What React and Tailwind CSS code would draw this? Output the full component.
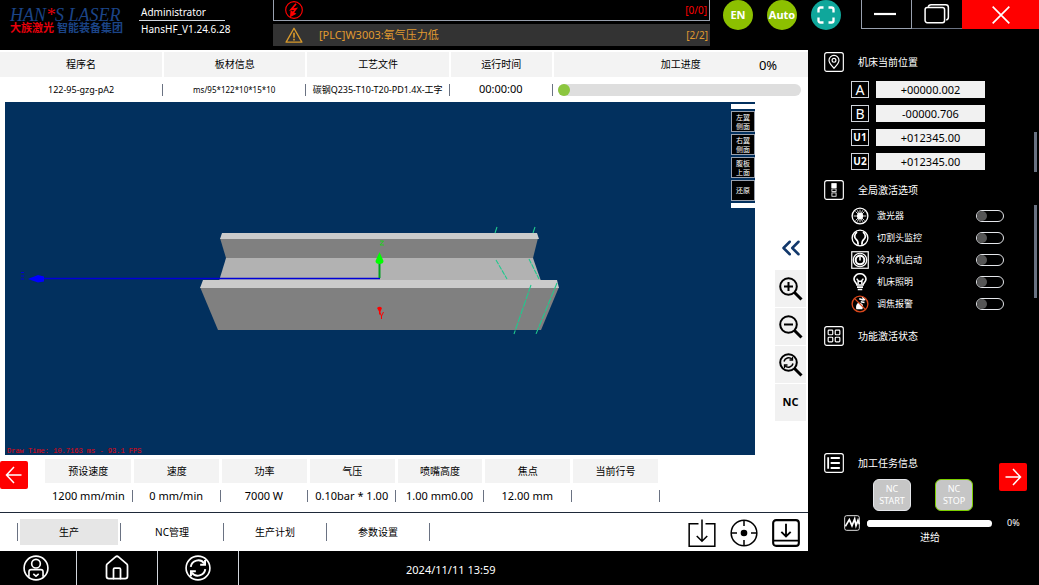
// App.jsx
import React from 'react';
import { Home, ChevronsLeft } from 'lucide-react';

// =================================================================
// 数据
// =================================================================

const params = [
  { name: '预设速度', value: '1200 mm/min' },
  { name: '速度', value: '0 mm/min' },
  { name: '功率', value: '7000 W' },
  { name: '气压', value: '0.10bar * 1.00' },
  { name: '喷嘴高度', value: '1.00 mm0.00' },
  { name: '焦点', value: '12.00 mm' },
  { name: '当前行号', value: '' },
];

const axes = [
  { name: 'A', value: '+00000.002' },
  { name: 'B', value: '-00000.706' },
  { name: 'U1', value: '+012345.00' },
  { name: 'U2', value: '+012345.00' },
];

const views = [['左翼', '侧面'], ['右翼', '侧面'], ['腹板', '上面'], ['还原']];

const tabs = ['生产', 'NC管理', '生产计划', '参数设置'];

// =================================================================
// 图标
// =================================================================

const Svg = ({ size = 24, stroke = 1.5, className = '', children }) => (
  <svg
    width={size}
    height={size}
    viewBox="0 0 24 24"
    fill="none"
    stroke="currentColor"
    strokeWidth={stroke}
    className={`shrink-0 ${className}`}
    aria-hidden="true"
  >
    {children}
  </svg>
);

const AlarmIcon = () => (
  <Svg size={20} stroke={1.4} className="text-[#ff0000]">
    <circle cx="12" cy="12" r="10" />
    <path d="M14.500 4.500L8.500 11.500l6-1-4 5" strokeWidth="2" />
    <path d="M8 19.500l.5-6 5 3z" fill="currentColor" />
  </Svg>
);

const WarnIcon = () => (
  <Svg size={18} stroke={1.8} className="text-[#d99a2b]">
    <path d="M12 3L22.5 21.5H1.5z" strokeLinejoin="round" />
    <path d="M12 9v6.5M12 17v2.2" strokeWidth="2.2" />
  </Svg>
);

const FullscreenIcon = () => (
  <Svg size={20} stroke={2.8}>
    <path d="M3 9V5.5Q3 3 5.500 3H9M15 3h3.500Q21 3 21 5.500V9M21 15v3.500Q21 21 18.500 21H15M9 21H5.500Q3 21 3 18.500V15" />
  </Svg>
);

const RestoreIcon = () => (
  <Svg size={26} stroke={1.4}>
    <rect x="1" y="6" width="18" height="14" rx="2" />
    <path d="M4 5.500Q4.300 3.500 6.500 3.500H20Q22.500 3.500 22.500 6V15Q22.500 17 20.500 17.500" />
  </Svg>
);

const Lens = ({ children }) => (
  <Svg size={24} stroke={2}>
    <circle cx="9.500" cy="9.500" r="8.300" />
    <path d="M15.500 15.500l7 7" strokeWidth="3" />
    {children}
  </Svg>
);

const ZoomInIcon = () => <Lens><path d="M9.500 5v9M5 9.500h9" /></Lens>;
const ZoomOutIcon = () => <Lens><path d="M5 9.500h9" /></Lens>;
const ZoomResetIcon = () => (
  <Lens>
    <path d="M5 8.500a4.700 4.700 0 0 1 8-2.300M14 10.500a4.700 4.700 0 0 1-8 2.300" strokeWidth="1.500" />
    <path d="M13.500 4v3h-3M5.500 15v-3h3" strokeWidth="1.300" />
  </Lens>
);

// 右侧分组标题用的方框图标
const Boxed = ({ children }) => (
  <Svg size={20} stroke={1.4}>
    <rect x="0.8" y="0.8" width="22.4" height="22.4" rx="2.5" />
    {children}
  </Svg>
);

const PinIcon = () => (
  <Boxed>
    <path d="M12 19.500C8 15.500 6 13 6 10a6 6 0 0 1 12 0c0 3-2 5.500-6 9.500z" />
    <circle cx="12" cy="10" r="2.300" />
  </Boxed>
);

const OptionIcon = () => (
  <Boxed>
    <rect x="9.500" y="4.500" width="5" height="4.500" fill="currentColor" />
    <rect x="9.500" y="10.700" width="5" height="3" strokeWidth="1" />
    <rect x="9.500" y="15.500" width="5" height="4" strokeWidth="1" />
  </Boxed>
);

const GridIcon = () => (
  <Boxed>
    <rect x="5" y="5" width="5.500" height="5.500" rx="1" />
    <rect x="13.500" y="5" width="5.500" height="5.500" rx="1" />
    <rect x="5" y="13.500" width="5.500" height="5.500" rx="1" />
    <rect x="13.500" y="13.500" width="5.500" height="5.500" rx="1" />
  </Boxed>
);

const ListIcon = () => (
  <Boxed>
    <path d="M5 5v14M8 6h11M8 12h11M8 18h11" strokeWidth="2.200" />
  </Boxed>
);

const LaserIcon = () => (
  <Svg size={18} stroke={1.8}>
    <circle cx="12" cy="12" r="10.500" />
    <circle cx="12" cy="12" r="3.300" fill="currentColor" />
    <path d="M12 3.500v17M3.500 12h17M6 6l12 12M18 6L6 18M8.500 4.500l7 15M15.500 4.500l-7 15" strokeWidth="1.100" />
  </Svg>
);

const HeadIcon = () => (
  <Svg size={18} stroke={1.8}>
    <circle cx="12" cy="12" r="10.500" />
    <path d="M8 4c-4 3-4 8-1 10q2.500 1.500 2.500 7M16 4c4 3 4 8 1 10q-2.500 1.500-2.500 7" strokeWidth="2.300" />
  </Svg>
);

const ChillerIcon = () => (
  <Svg size={18} stroke={1.6}>
    <rect x="1" y="1" width="22" height="22" />
    <circle cx="12" cy="12" r="9" />
    <circle cx="12" cy="12" r="5.800" strokeWidth="2.800" />
    <path d="M12 7.500v5" strokeWidth="2" />
  </Svg>
);

const LampIcon = () => (
  <Svg size={18} stroke={2.200}>
    <path d="M8 16c0-2.500-4-4-4-8a8 7 0 0 1 16 0c0 4-4 5.500-4 8z" />
    <path d="M9.500 15V10L7.500 7.500M14.500 15V10l2-2.500M9.500 11h5" strokeWidth="2" />
    <path d="M8 18.800h8M9 22h6" />
  </Svg>
);

const FocusAlarmIcon = () => (
  <Svg size={18} stroke={1.8}>
    <path d="M7 19c-1-5 1-9 5-8.500s5 4 3 8.500z" fill="currentColor" stroke="none" />
    <path d="M11 5l6 2M13 9l5 1M15 3l4 4" strokeWidth="2" />
    <circle cx="12" cy="12" r="10.500" stroke="#d9481c" />
    <path d="M4.500 4.500l15 15" stroke="#d9481c" />
  </Svg>
);

const WaveIcon = () => (
  <Svg size={16} stroke={1.3}>
    <rect x="1" y="1" width="22" height="22" rx="3" />
    <path d="M2 17L8 7l4 9 4-10 2 10 3-8 2 6" strokeWidth="2.600" />
  </Svg>
);

const ImportIcon = () => (
  <Svg size={28} stroke={1.3}>
    <path d="M9 4H1v19.300h22V4h-8" />
    <path d="M12 .5V19M7.500 14.500L12 19l4.500-4.500" />
  </Svg>
);

const AimIcon = () => (
  <Svg size={28} stroke={1.3}>
    <circle cx="12" cy="12" r="11" />
    <circle cx="12" cy="12" r="2.200" fill="currentColor" />
    <path d="M12 1v5M12 18v5M1 12h5M18 12h5" />
  </Svg>
);

const SaveIcon = () => (
  <Svg size={28} stroke={1.8}>
    <rect x="1" y="1" width="22" height="22" rx="2.500" />
    <path d="M1 18.500h22M12 4v11M8 11l4 4 4-4" strokeWidth="1.600" />
  </Svg>
);

const UserIcon = () => (
  <Svg size={26} stroke={1.5}>
    <circle cx="12" cy="12" r="11" />
    <circle cx="12" cy="8" r="4" />
    <path d="M5.500 20v-4.500q0-2 2-2h9q2 0 2 2V20" />
    <path d="M9.500 17.500l2.500 2 2.500-2" />
  </Svg>
);

const RefreshIcon = () => (
  <Svg size={26} stroke={1.500}>
    <circle cx="12" cy="12" r="11" />
    <path d="M5.300 11a7 7 0 0 1 12.500-3.300M18.700 13a7 7 0 0 1-12.500 3.300" strokeWidth="1.800" />
    <path d="M18.500 4.500V9H14M5.500 19.500V15H10" strokeWidth="1.800" />
  </Svg>
);

const ArrowIcon = ({ flip }) => (
  <Svg size={20} stroke={1.8} className={flip ? 'rotate-180' : ''}>
    <path d="M3 12h18M12 2.500L21 12l-9 9.500" />
  </Svg>
);

const switches = [
  { name: '激光器', icon: <LaserIcon /> },
  { name: '切割头监控', icon: <HeadIcon /> },
  { name: '冷水机启动', icon: <ChillerIcon /> },
  { name: '机床照明', icon: <LampIcon /> },
  { name: '调焦报警', icon: <FocusAlarmIcon /> },
];

// =================================================================
// 公共组件
// =================================================================

const Round = ({ color, label, children }) => (
  <button
    aria-label={label}
    className={`flex size-[30px] items-center justify-center rounded-full text-[11px] font-bold text-white ${color}`}
  >
    {children}
  </button>
);

const SectionTitle = ({ icon, children }) => (
  <h2 className="flex h-5 items-center gap-3.5 text-[10px]">
    {icon}
    {children}
  </h2>
);

const Divider = ({ tall }) => <span className={`w-px shrink-0 bg-gray-500 ${tall ? 'h-[18px]' : 'h-3'}`} />;

// 顶部程序信息表的数值单元格
const InfoCell = ({ size, children }) => (
  <td className="p-0">
    <div className="flex h-[25px] items-center">
      <span className={`grow whitespace-nowrap text-center ${size}`}>{children}</span>
      <Divider />
    </div>
  </td>
);

// =================================================================
// 页面区域
// =================================================================

function Header() {
  return (
    <header className="flex h-[50px] shrink-0 items-start">
      <div className="w-[139px] shrink-0 pl-2.5 pt-2">
        <div className="font-['Liberation_Serif',serif] text-lg leading-[14px] whitespace-nowrap text-[#1b4487] italic">
          HAN<span className="text-red-600">*</span>S LASER
        </div>
        <div className="flex justify-between pr-4 text-[11px] leading-3 font-bold whitespace-nowrap">
          <span className="text-red-600">大族激光</span>
          <span className="text-[#1b4487]">智能装备集团</span>
        </div>
      </div>
      <div className="w-[86px] shrink-0 pt-1 text-[10px] leading-4">
        <div className="border-b border-gray-300 px-0.5">Administrator</div>
        <div className="px-0.5">HansHF_V1.24.6.28</div>
      </div>
      <div className="ml-12 flex min-w-0 grow flex-col gap-[3px] text-[11px]">
        <div className="flex h-[21px] items-center border border-t-0 border-gray-400 pr-0.5 pl-[10px] text-[#ff0000]">
          <AlarmIcon />
          <span className="ml-auto text-[10px]">[0/0]</span>
        </div>
        <div className="flex h-[22px] items-center bg-[#333333] pr-0.5 pl-3 text-[#e09a30]">
          <WarnIcon />
          <span className="ml-4">[PLC]W3003:氧气压力低</span>
          <span className="ml-auto text-[10px]">[2/2]</span>
        </div>
      </div>
      <div className="flex shrink-0 gap-3.5 px-[13px]">
        <Round color="bg-[#8cc000]">EN</Round>
        <Round color="bg-[#8cc000]">Auto</Round>
        <Round color="bg-[#0fa79b]" label="全屏"><FullscreenIcon /></Round>
      </div>
      <div className="ml-[7px] flex h-[29px] shrink-0">
        <button aria-label="最小化" className="flex w-[51px] items-center justify-center border border-t-0 border-gray-400 pr-1">
          <Svg size={22} stroke={2.400}><path d="M0 12h24" /></Svg>
        </button>
        <button aria-label="还原窗口" className="flex w-[50px] items-center justify-center border-b border-gray-500">
          <RestoreIcon />
        </button>
        <button aria-label="关闭" className="flex w-[77px] items-center justify-center bg-[#ff0000]">
          <Svg size={20} stroke={2}><path d="M2 2l20 20M22 2L2 22" /></Svg>
        </button>
      </div>
    </header>
  );
}

function ProgramInfo() {
  return (
    <table className="w-full table-fixed border-collapse">
      <colgroup>
        <col className="w-[20.2%]" />
        <col className="w-[17.7%]" />
        <col className="w-[17.8%]" />
        <col className="w-[12.7%]" />
        <col />
      </colgroup>
      <thead>
        <tr className="h-[25px] bg-[#f3f3f3] text-[10px]">
          {['程序名', '板材信息', '工艺文件', '运行时间'].map((t) => (
            <th key={t} className="border-r-2 border-white p-0 font-normal">{t}</th>
          ))}
          <th className="p-0 font-normal">
            <div className="flex items-center pl-20">
              <span className="grow text-center">加工进度</span>
              <span className="w-20 text-center text-[13px] leading-5">0%</span>
            </div>
          </th>
        </tr>
      </thead>
      <tbody>
        <tr>
          <InfoCell size="text-[9px]">122-95-gzg-pA2</InfoCell>
          <InfoCell size="text-[8px]">ms/95*122*10*15*10</InfoCell>
          <InfoCell size="text-[9px]">碳钢Q235-T10-T20-PD1.4X-工字</InfoCell>
          <InfoCell size="text-[11px]">00:00:00</InfoCell>
          <td className="p-0 pr-[7px] pl-[5px]">
            <div role="progressbar" aria-label="加工进度" aria-valuenow="0" className="h-3 rounded-full bg-[#dedede]">
              <div className="size-3 rounded-full bg-[#8cc63f]" />
            </div>
          </td>
        </tr>
      </tbody>
    </table>
  );
}

// 三维视图：工字钢模型和坐标轴
function Viewport() {
  return (
    <div className="relative ml-[5px] min-w-0 grow bg-[#02305e]">
      <svg className="absolute inset-0 size-full" viewBox="5 102 750 353" aria-hidden="true">
        <polygon points="226,258 533,258 541,281 219,281" fill="#b2b2b2" />
        <polygon points="220,238 538,238 533,258 226,258" fill="#808080" />
        <polygon points="222,233 537,233 539,239 220,239" fill="#cbcbcb" />
        <polygon points="200,287 559,287 541,330 218,330" fill="#808080" />
        <polygon points="203,280 557,280 559,288 200,288" fill="#cbcbcb" />
        <path d="M30 278.500H380" stroke="#0000d8" strokeWidth="1.300" />
        <path d="M28 279l10-4 6 1.500v5l-6 1z" fill="#0000ff" />
        <path d="M21 272.500h3M21 276h3M21 279h3" stroke="#0000d8" />
        <path d="M379.500 278V262" stroke="#00a020" strokeWidth="2" />
        <path d="M379.500 252l4 9q0 3-4 3t-4-3z" fill="#00ff00" />
        <path d="M380 241h3.500l-3.500 4h4" stroke="#20d020" fill="none" />
        <path d="M377 308q2.500-2.500 5 0l-1.500 3.500v3h-1.500v-3z" fill="#ff0000" />
        <path d="M380 313l1.500 3 2-4M381.500 316v3" stroke="#ff0000" fill="none" />
        <g stroke="#20c98e" strokeWidth="1.100" fill="none">
          <path d="M497 227l-2 6M535 227l-2 6" />
          <path d="M496 260l11 19M529 259l10 20" strokeDasharray="5 1" />
          <path d="M531 285L514 334M557 283L536 334" strokeDasharray="7 1" />
        </g>
      </svg>
      <p className="absolute bottom-0 left-0.5 font-['Liberation_Mono',monospace] text-[7px] leading-2 text-red-600">
        Draw Time: 10.7163 ms - 93.1 FPS
      </p>
      <div className="absolute top-0.5 right-0 flex w-6 flex-col items-stretch gap-0.5">
        <div className="h-[5px] bg-white" />
        {views.map((lines) => (
          <button key={lines.join('')} className="flex h-[21px] flex-col items-center justify-center border border-gray-400 bg-black text-[7px] leading-[9px] text-white">
            {lines.map((l) => <span key={l}>{l}</span>)}
          </button>
        ))}
        <div className="h-[5px] bg-white" />
      </div>
    </div>
  );
}

function ViewTools() {
  const tool = 'flex h-[37px] w-[31px] items-center justify-center bg-[#f1f1f1]';
  return (
    <div className="flex w-[53px] shrink-0 flex-col items-end pt-[131px] pr-0.5">
      <button aria-label="展开" className="mb-[7px] flex w-[31px] justify-center text-[#12386b]">
        <ChevronsLeft size={30} strokeWidth={2} />
      </button>
      <div className="flex flex-col gap-px">
        <button aria-label="放大" className={tool}><ZoomInIcon /></button>
        <button aria-label="缩小" className={tool}><ZoomOutIcon /></button>
        <button aria-label="复位" className={tool}><ZoomResetIcon /></button>
        <button className={`${tool} text-[11px] font-bold`}>NC</button>
      </div>
    </div>
  );
}

function ParamBar() {
  return (
    <div className="flex h-[58px] shrink-0 items-start border-b border-gray-800 pt-1">
      <div className="w-[45px] shrink-0 pt-0.5">
        <button aria-label="上一页" className="flex size-7 items-center justify-center rounded-xs bg-[#ff0000] text-white">
          <ArrowIcon flip />
        </button>
      </div>
      <div className="min-w-0 grow">
        <table className="w-full table-fixed border-collapse">
          <thead>
            <tr className="h-6">
              {params.map((p) => (
                <th key={p.name} className="border-r-3 border-white bg-[#f3f3f3] p-0 text-[10px] font-normal">{p.name}</th>
              ))}
            </tr>
          </thead>
          <tbody>
            <tr>
              {params.map((p) => (
                <td key={p.name} className="p-0">
                  <div className="flex h-[26px] items-center">
                    <span className="grow text-center text-[11px] whitespace-nowrap">{p.value}</span>
                    <Divider />
                  </div>
                </td>
              ))}
            </tr>
          </tbody>
        </table>
      </div>
      <div className="w-[147px] shrink-0" />
    </div>
  );
}

function TabBar() {
  return (
    <nav className="flex h-[38px] shrink-0 items-center pr-2 pl-[17px]">
      <Divider tall />
      {tabs.map((t, i) => (
        <React.Fragment key={t}>
          <button className={`mx-0.5 h-[26px] w-[98px] text-[10px] ${i === 0 ? 'bg-[#e6e6e6]' : ''}`}>{t}</button>
          <Divider tall />
        </React.Fragment>
      ))}
      <div className="ml-auto flex gap-3.5 pt-0.5">
        <button aria-label="导入"><ImportIcon /></button>
        <button aria-label="定位"><AimIcon /></button>
        <button aria-label="保存"><SaveIcon /></button>
      </div>
    </nav>
  );
}

function Footer() {
  const item = 'flex w-[81px] items-center justify-center border-r border-gray-300';
  return (
    <footer className="flex h-[34px] shrink-0 bg-black text-white">
      <button aria-label="用户" className="flex w-[77px] items-center justify-center border-r border-gray-300 pr-1"><UserIcon /></button>
      <button aria-label="主页" className={item}><Home size={28} strokeWidth={1.5} /></button>
      <button aria-label="刷新" className={item}><RefreshIcon /></button>
      <time className="ml-[167px] self-center pt-1 text-[11px]">2024/11/11 13:59</time>
    </footer>
  );
}

function SidePanel() {
  return (
    <aside className="flex w-[231px] shrink-0 flex-col pl-4">
      <section className="flex h-[129px] pt-0.5 pr-0.5">
        <div className="grow">
          <SectionTitle icon={<PinIcon />}>机床当前位置</SectionTitle>
          <div className="mt-[9px] flex flex-col gap-[7px] pl-[27px]">
            {axes.map((a) => (
              <label key={a.name} className="flex items-center gap-[7px]">
                <span className={`flex h-[17px] w-[18px] items-center justify-center border border-gray-300 ${a.name.length > 1 ? 'text-[10px] font-bold' : 'text-sm'}`}>
                  {a.name}
                </span>
                <input readOnly value={a.value} className="h-[17px] w-[109px] bg-[#f1f1f1] text-center text-[11px] text-black" />
              </label>
            ))}
          </div>
        </div>
        <div className="mt-20 h-10 w-[3px] bg-gray-500" />
      </section>

      <section className="flex h-[147px] pt-px pr-0.5">
        <div className="grow">
          <SectionTitle icon={<OptionIcon />}>全局激活选项</SectionTitle>
          <div className="mt-[5px] flex flex-col pl-[27px]">
            {switches.map((s) => (
              <label key={s.name} className="flex h-[22px] items-center pr-[30px] text-[9px]">
                {s.icon}
                <span className="ml-2">{s.name}</span>
                <input
                  type="checkbox"
                  role="switch"
                  className="ml-auto flex h-3 w-7 appearance-none items-center rounded-full border border-gray-200 before:size-2.5 before:rounded-full before:bg-[#555555] checked:justify-end"
                />
              </label>
            ))}
          </div>
        </div>
        <div className="mt-[25px] h-[93px] w-[3px] bg-gray-500" />
      </section>

      <section className="h-[126px]">
        <SectionTitle icon={<GridIcon />}>功能激活状态</SectionTitle>
      </section>

      <section className="pt-px">
        <div className="flex items-start justify-between pr-3">
          <SectionTitle icon={<ListIcon />}>加工任务信息</SectionTitle>
          <button aria-label="下一页" className="mt-2.5 flex size-7 items-center justify-center rounded-xs bg-[#ff0000]">
            <ArrowIcon />
          </button>
        </div>
        <div className="-mt-3 flex gap-6 pl-[49px] text-[9px] leading-3">
          <button className="h-8 w-[38px] rounded-md border border-gray-200 bg-[#c6c6c6]">NC<br />START</button>
          <button className="h-8 w-[38px] rounded-md border border-lime-500 bg-[#c6c6c6]">NC<br />STOP</button>
        </div>
        <label className="mt-1 flex items-center gap-[7px] pl-5 text-[9px]">
          <WaveIcon />
          <input
            type="range"
            defaultValue="0"
            aria-label="进给"
            className="h-[7px] w-[125px] appearance-none rounded-full bg-white [&::-webkit-slider-thumb]:size-[7px] [&::-webkit-slider-thumb]:appearance-none [&::-webkit-slider-thumb]:rounded-full [&::-webkit-slider-thumb]:bg-white"
          />
          <span className="ml-2">0%</span>
        </label>
        <p className="pl-24 text-[10px] leading-3">进给</p>
      </section>
    </aside>
  );
}

export default function App() {
  return (
    <div className="flex min-h-screen flex-col bg-black font-['Noto_Sans','Noto_Sans_CJK_SC',sans-serif] text-white">
      <Header />
      <div className="flex grow">
        <div className="flex min-w-0 grow flex-col">
          <main className="flex min-w-0 grow flex-col bg-white pt-0.5 text-black">
            <ProgramInfo />
            <div className="flex grow">
              <Viewport />
              <ViewTools />
            </div>
            <ParamBar />
            <TabBar />
          </main>
          <Footer />
        </div>
        <SidePanel />
      </div>
    </div>
  );
}
